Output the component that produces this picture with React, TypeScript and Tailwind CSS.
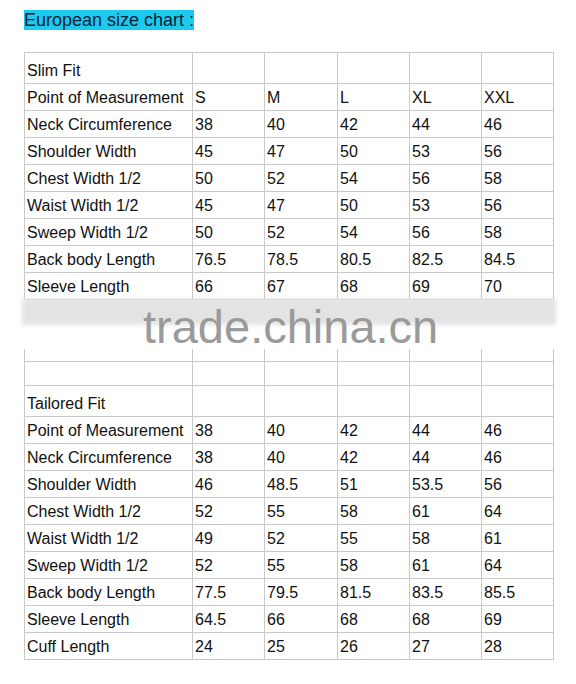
const sizes = ["S", "M", "L", "XL", "XXL"];

const slimRows: [string, string[]][] = [
  ["Neck Circumference", ["38", "40", "42", "44", "46"]],
  ["Shoulder Width", ["45", "47", "50", "53", "56"]],
  ["Chest Width 1/2", ["50", "52", "54", "56", "58"]],
  ["Waist Width 1/2", ["45", "47", "50", "53", "56"]],
  ["Sweep Width 1/2", ["50", "52", "54", "56", "58"]],
  ["Back body Length", ["76.5", "78.5", "80.5", "82.5", "84.5"]],
  ["Sleeve Length", ["66", "67", "68", "69", "70"]],
];

const tailoredRows: [string, string[]][] = [
  ["Point of Measurement", ["38", "40", "42", "44", "46"]],
  ["Neck Circumference", ["38", "40", "42", "44", "46"]],
  ["Shoulder Width", ["46", "48.5", "51", "53.5", "56"]],
  ["Chest Width 1/2", ["52", "55", "58", "61", "64"]],
  ["Waist Width 1/2", ["49", "52", "55", "58", "61"]],
  ["Sweep Width 1/2", ["52", "55", "58", "61", "64"]],
  ["Back body Length", ["77.5", "79.5", "81.5", "83.5", "85.5"]],
  ["Sleeve Length", ["64.5", "66", "68", "68", "69"]],
  ["Cuff Length", ["24", "25", "26", "27", "28"]],
];

const grid = "grid grid-cols-[168px_72px_73px_72px_72px_72px]";

function Row({ cells, tall, short }: { cells: string[]; tall?: boolean; short?: boolean }) {
  const h = tall ? "h-[31px]" : short ? "h-[24px]" : "h-[27px]";
  return (
    <div className={grid}>
      {cells.map((c, i) => (
        <div
          key={i}
          className={`${h} border-t border-l border-[#c9c9c9] flex items-end pl-[2px] pb-[3px] leading-[18px] whitespace-nowrap`}
        >
          {c}
        </div>
      ))}
    </div>
  );
}

export default function App() {
  return (
    <div className="w-[576px] h-[684px] bg-white pt-[10px] pl-[24px] text-[16px] text-[#111] font-['Liberation_Sans',Arial,sans-serif]">
      <div className="h-[21px] leading-[21px] text-[18px]">
        <span className="bg-[#1cc9ef] text-[#0f2233]">European size chart :</span>
      </div>

      <div className="mt-[21px] w-[530px] border-r border-b border-[#c9c9c9]">
        <Row cells={["Slim Fit", "", "", "", "", ""]} tall />
        <Row cells={["Point of Measurement", ...sizes]} />
        {slimRows.map(([name, vals]) => (
          <Row key={name} cells={[name, ...vals]} />
        ))}
      </div>

      {/* watermark band */}
      <div className="relative h-[50px] w-[530px]">
        <div className="-mt-[1px] -ml-[2px] h-[26px] w-[534px] bg-[#e3e3e3] blur-[2px]"></div>
        <div className="absolute left-[119px] top-[4px] text-[47px] leading-[47px] text-[#9a9a9a] whitespace-nowrap">
          trade.china.cn
        </div>
      </div>

      <div className="w-[530px] border-r border-b border-[#c9c9c9]">
        <div className={grid}>
          {[0, 1, 2, 3, 4, 5].map((i) => (
            <div key={i} className="h-[12px] border-l border-[#c9c9c9]"></div>
          ))}
        </div>
        <Row cells={["", "", "", "", "", ""]} short />
        <Row cells={["Tailored Fit", "", "", "", "", ""]} tall />
        {tailoredRows.map(([name, vals]) => (
          <Row key={name} cells={[name, ...vals]} />
        ))}
      </div>
    </div>
  );
}
